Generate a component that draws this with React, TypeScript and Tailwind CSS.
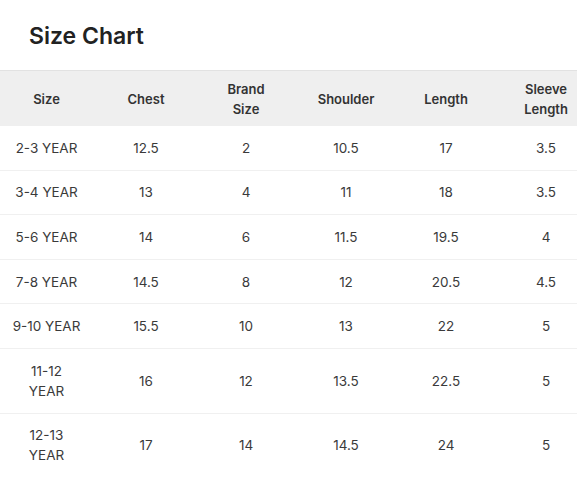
const HEADERS = [["Size"], ["Chest"], ["Brand", "Size"], ["Shoulder"], ["Length"], ["Sleeve", "Length"]];

const ROWS: (string | string[])[][] = [
  ["2-3 YEAR", "12.5", "2", "10.5", "17", "3.5"],
  ["3-4 YEAR", "13", "4", "11", "18", "3.5"],
  ["5-6 YEAR", "14", "6", "11.5", "19.5", "4"],
  ["7-8 YEAR", "14.5", "8", "12", "20.5", "4.5"],
  ["9-10 YEAR", "15.5", "10", "13", "22", "5"],
  [["11-12", "YEAR"], "16", "12", "13.5", "22.5", "5"],
  [["12-13", "YEAR"], "17", "14", "14.5", "24", "5"],
];

const GRID = "grid grid-cols-[96px_repeat(5,100px)] w-[596px]";

function Lines({ value }: { value: string | string[] }) {
  const lines = Array.isArray(value) ? value : [value];
  return (
    <>
      {lines.map((l, i) => (
        <div key={i}>{l}</div>
      ))}
    </>
  );
}

export default function App() {
  return (
    <div className="min-h-[482px] w-[580px] bg-white font-['Inter',sans-serif] text-[#3a3a3a]">
      <h1 className="pl-[29px] pt-[22px] text-[23px] font-semibold leading-[28px] text-[#222]">
        Size Chart
      </h1>

      <div className="mt-[20px] w-[577px] overflow-hidden border-t border-[#e2e2e2]">
        <div className={`${GRID} bg-[#efefef]`}>
          {HEADERS.map((h, i) => (
            <div
              key={i}
              className={`flex h-[55px] flex-col items-center justify-center text-center text-[13px] font-semibold leading-[20px] text-[#333] ${i === 0 ? "pr-[3px]" : ""}`}
            >
              <Lines value={h} />
            </div>
          ))}
        </div>

        {ROWS.map((row, r) => (
          <div
            key={r}
            className={`${GRID} ${r < ROWS.length - 1 ? "border-b border-[#f0f0f0]" : ""}`}
          >
            {row.map((cell, c) => (
              <div
                key={c}
                className={`flex flex-col items-center justify-center py-[11.8px] text-center text-[13.5px] leading-[20px] ${c === 0 ? "pr-[3px]" : ""}`}
              >
                <Lines value={cell} />
              </div>
            ))}
          </div>
        ))}
      </div>
    </div>
  );
}
